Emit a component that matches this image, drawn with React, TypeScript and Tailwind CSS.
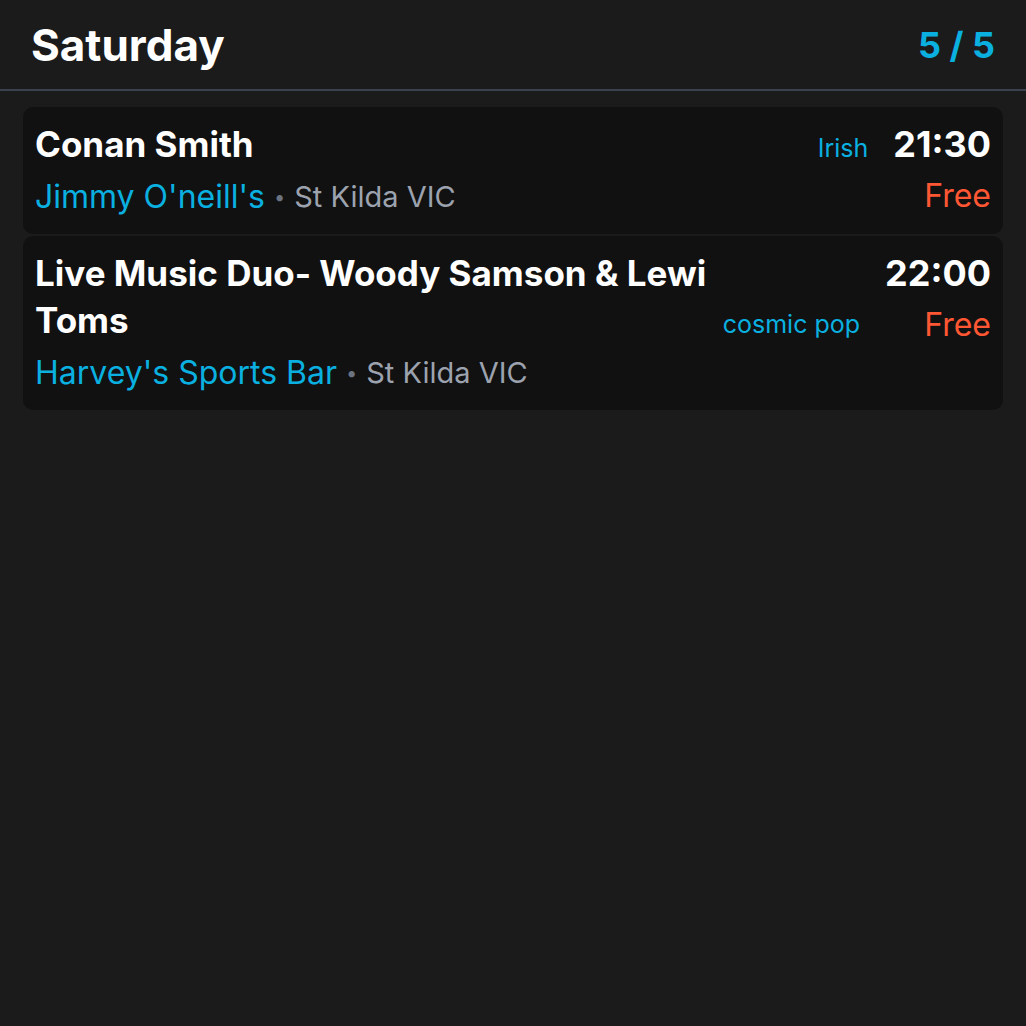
const gigs = [
  {
    title: 'Conan Smith',
    venue: "Jimmy O'neill's",
    suburb: 'St Kilda VIC',
    genre: 'Irish',
    time: '21:30',
    price: 'Free',
  },
  {
    title: 'Live Music Duo- Woody Samson & Lewi Toms',
    venue: "Harvey's Sports Bar",
    suburb: 'St Kilda VIC',
    genre: 'cosmic pop',
    time: '22:00',
    price: 'Free',
  },
];

type Gig = (typeof gigs)[number];

function GigCard({ gig }: { gig: Gig }) {
  return (
    <div className="flex items-start gap-[25px] rounded-[10px] bg-[#111111] px-[12px] pt-[14px] pb-[16px]">
      <div className="flex-1 min-w-0">
        <div className="flex items-end gap-[8px]">
          <h3 className="flex-1 text-[35px] font-bold leading-[47px] text-white">{gig.title}</h3>
          <span className="text-[25px] leading-[40px] text-[#0ab0e0]">{gig.genre}</span>
        </div>
        <div className="mt-[8px] flex items-center leading-[42px]">
          <span className="text-[32px] text-[#0ab0e0]">{gig.venue}</span>
          <span className="mx-[9px] text-[20px] text-[#6b7280]">•</span>
          <span className="text-[29px] text-[#9ca3af]">{gig.suburb}</span>
        </div>
      </div>
      <div className="flex flex-col items-end">
        <span className="text-[36px] font-bold leading-[46px] text-white">{gig.time}</span>
        <span className="mt-[9px] text-[32px] leading-[40px] text-[#ff5733]">{gig.price}</span>
      </div>
    </div>
  );
}

export default function App() {
  return (
    <div className="min-h-screen bg-[#1b1b1b]" style={{ fontFamily: 'Inter, "Noto Sans", sans-serif' }}>
      <header className="flex h-[91px] items-center justify-between border-b-2 border-[#3a4250] px-[31px]">
        <h1 className="text-[44px] font-bold text-white">Saturday</h1>
        <span className="text-[36px] font-bold text-[#0ab0e0]">5 / 5</span>
      </header>
      <main className="flex flex-col gap-[2px] px-[23px] pt-[16px]">
        {gigs.map((gig) => (
          <GigCard key={gig.time} gig={gig} />
        ))}
      </main>
    </div>
  );
}
